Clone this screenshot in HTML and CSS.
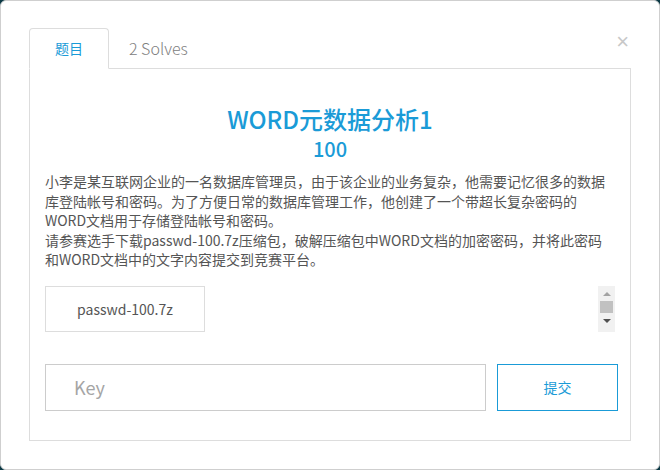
FILE: index.html
```html
<!DOCTYPE html>
<html lang="zh-CN">
<head>
<meta charset="utf-8">
<title>题目</title>
<link rel="stylesheet" href="styles.css">
</head>
<body>
<div class="modal">
  <button class="close" type="button">×</button>
  <ul class="tabs">
    <li class="tab active">题目</li>
    <li class="tab">2 Solves</li>
  </ul>
  <div class="tab-content">
    <h3 class="title">WORD元数据分析1</h3>
    <h4 class="score">100</h4>
    <p class="desc">小李是某互联网企业的一名数据库管理员，由于该企业的业务复杂，他需要记忆很多的数据库登陆帐号和密码。为了方便日常的数据库管理工作，他创建了一个带超长复杂密码的WORD文档用于存储登陆帐号和密码。<br>请参赛选手下载passwd-100.7z压缩包，破解压缩包中WORD文档的加密密码，并将此密码和WORD文档中的文字内容提交到竞赛平台。</p>
    <div class="files">
      <a class="file">passwd-100.7z</a>
      <div class="scrollbar">
        <span class="arrow up"></span>
        <span class="thumb"></span>
        <span class="arrow down"></span>
      </div>
    </div>
    <div class="submit-row">
      <input class="key" type="text" placeholder="Key">
      <button class="submit" type="button">提交</button>
    </div>
  </div>
</div>
</body>
</html>
```
FILE: styles.css
```css
html, body {
  margin: 0;
  padding: 0;
}
body {
  width: 660px;
  height: 470px;
  background: #0c3a46;
  font-family: "Noto Sans CJK SC", "Noto Sans", sans-serif;
  font-size: 14px;
  color: #555;
}
.modal {
  position: relative;
  box-sizing: border-box;
  width: 660px;
  height: 470px;
  background: #fff;
  border: 1px solid #cfcfcf;
  border-radius: 6px;
  padding: 27px 28px 0 28px;
}
.close {
  position: absolute;
  top: 29px;
  right: 30px;
  border: 0;
  background: none;
  padding: 0;
  font-family: "Liberation Sans", sans-serif;
  font-size: 22px;
  line-height: 24px;
  color: #c8c8c8;
}
.tabs {
  display: flex;
  margin: 0;
  padding: 0;
  list-style: none;
  border-bottom: 1px solid #ddd;
}
.tab {
  padding: 9px 15px 10px 17px;
  margin-left: 2px;
  line-height: 20px;
  border: 1px solid transparent;
  border-radius: 4px 4px 0 0;
  margin-bottom: -1px;
  color: #808080;
  font-size: 16px;
  font-weight: 300;
}
.tab.active {
  margin-left: 0;
  padding-left: 25px;
  padding-right: 25px;
  color: #1a9bd7;
  background: #fff;
  font-size: 14px;
  font-weight: 400;
  border-color: #ddd #ddd transparent;
}
.tab-content {
  box-sizing: border-box;
  height: 372px;
  border: 1px solid #ddd;
  border-top: 0;
  padding: 15px;
}
.title {
  margin: 21px 0 0;
  text-align: center;
  font-size: 24px;
  line-height: 28px;
  font-weight: 500;
  color: #1a9bd7;
}
.score {
  margin: 4px 0 0;
  text-align: center;
  font-size: 20px;
  line-height: 24px;
  font-weight: 500;
  color: #1a9bd7;
}
.desc {
  margin: 11px 0 0;
  line-height: 19.5px;
  font-size: 14px;
  color: #555;
}
.files {
  display: flex;
  justify-content: space-between;
  margin-top: 16px;
}
.file {
  box-sizing: border-box;
  width: 160px;
  height: 46px;
  border: 1px solid #ddd;
  display: flex;
  align-items: center;
  justify-content: center;
  color: #555;
  font-size: 14px;
}
.scrollbar {
  width: 17px;
  height: 46px;
  background: #f1f1f1;
  display: flex;
  flex-direction: column;
  align-items: center;
}
.arrow {
  width: 0;
  height: 0;
  border-left: 4px solid transparent;
  border-right: 4px solid transparent;
}
.arrow.up {
  margin-top: 6px;
  border-bottom: 4px solid #a3a3a3;
}
.arrow.down {
  margin-top: 6px;
  border-top: 4px solid #505050;
}
.thumb {
  margin-top: 5px;
  width: 13px;
  height: 12px;
  background: #c1c1c1;
}
.submit-row {
  display: flex;
  margin-top: 32px;
  margin-right: -3px;
}
.key {
  box-sizing: border-box;
  width: 442px;
  height: 47px;
  border: 1px solid #ccc;
  padding: 0 28px;
  font-family: "Noto Sans CJK SC", "Noto Sans", sans-serif;
  font-size: 18px;
  color: #555;
  outline: none;
}
.key::placeholder {
  color: #a5a5a5;
}
.submit {
  box-sizing: border-box;
  width: 121px;
  height: 47px;
  margin-left: 11px;
  border: 1px solid #1a9bd7;
  background: #fff;
  color: #1a9bd7;
  font-family: "Noto Sans CJK SC", "Noto Sans", sans-serif;
  font-size: 14px;
}
```
